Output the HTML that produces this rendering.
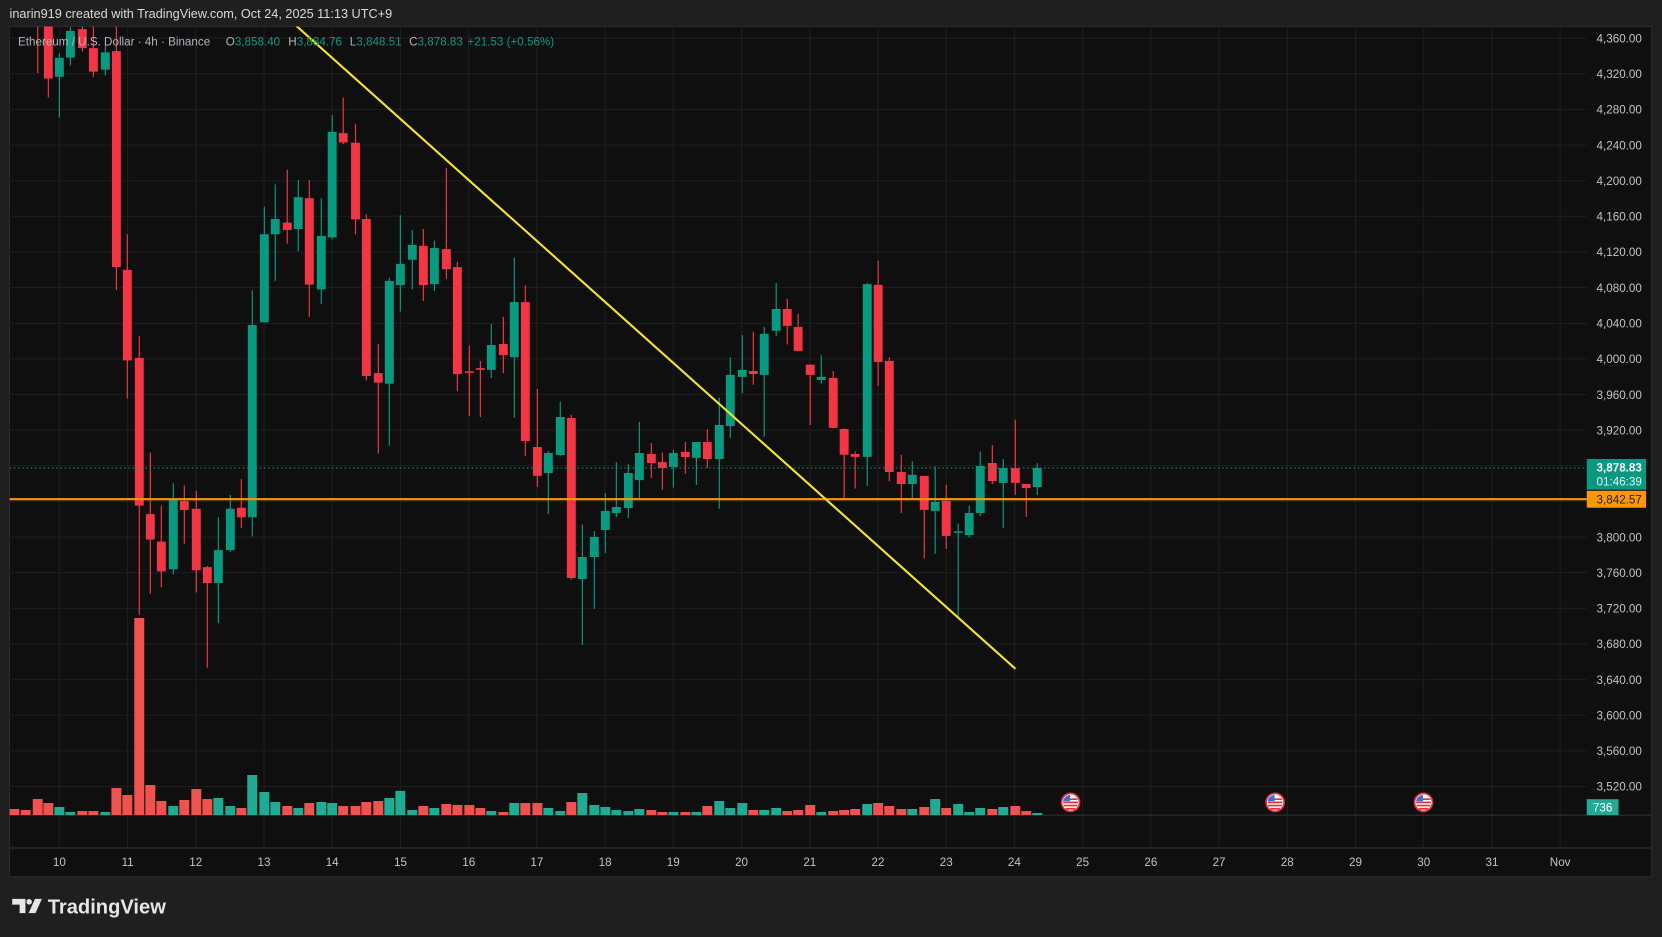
<!DOCTYPE html>
<html><head><meta charset="utf-8"><style>
html,body{margin:0;padding:0;background:#1f1f1f;overflow:hidden}
svg{display:block}
text{font-family:"Liberation Sans",sans-serif}
</style></head><body>
<svg width="1662" height="937" viewBox="0 0 1568 884" xmlns="http://www.w3.org/2000/svg">
<defs><clipPath id="pc"><rect x="9" y="25" width="1488" height="744"/></clipPath>
<g id="flag"><circle r="8.5" fill="#fff" stroke="#e3303d" stroke-width="1.6"/><path d="M-6.5 -3H6.5M-7 0H7M-6.5 3H6.5M-4.5 6H4.5" stroke="#e3303d" stroke-width="1.6"/><path d="M-7 -1.2A7 7 0 0 1 -0.5 -7V-1.2Z" fill="#3b6fd8"/></g>
</defs>
<rect width="1568" height="884" fill="#1f1f1f"/>
<text x="9" y="17" font-size="12" fill="#d9d9d9">inarin919 created with TradingView.com, Oct 24, 2025 11:13 UTC+9</text>
<rect x="9" y="25" width="1549" height="802" fill="#0f0f0f" stroke="#2a2a2a" stroke-width="1"/>
<g stroke="#1e1e1e" stroke-width="1">
<path d="M9 36H1497M9 69.6H1497M9 103.2H1497M9 136.9H1497M9 170.5H1497M9 204.1H1497M9 237.7H1497M9 271.3H1497M9 305H1497M9 338.6H1497M9 372.2H1497M9 405.8H1497M9 439.4H1497M9 473.1H1497M9 506.7H1497M9 540.3H1497M9 573.9H1497M9 607.5H1497M9 641.2H1497M9 674.8H1497M9 708.4H1497M9 742H1497"/>
<path d="M56 25V800M120.4 25V800M184.7 25V800M249.1 25V800M313.4 25V800M377.8 25V800M442.2 25V800M506.5 25V800M570.9 25V800M635.2 25V800M699.6 25V800M764 25V800M828.3 25V800M892.7 25V800M957 25V800M1021.4 25V800M1085.8 25V800M1150.1 25V800M1214.5 25V800M1278.8 25V800M1343.2 25V800M1407.6 25V800M1471.9 25V800"/>
</g>
<path d="M9 769H1558M9 800H1558" stroke="#2e2e2e" stroke-width="1.2"/>
<g clip-path="url(#pc)">
<!-- volume -->
<path stroke="#ef5350" stroke-width="9.4" fill="none" d="M13.5 769V763.2M24.2 769V764.2M35.6 769V753.8M45.6 769V757.6M77.7 769V765.1M88.1 769V765.1M109.8 769V743.4M120.1 769V750M131.4 769V583M141.8 769V740.6M152.2 769V755.7M173.9 769V754.7M185.2 769V744.4M195.6 769V753.8M227.7 769V762.3M271 769V760.4M291.8 769V757.6M323.8 769V760.4M335.4 769V760.4M345.6 769V756.6M356.9 769V755.7M399.4 769V760.4M421.1 769V758.5M431.5 769V759.5M442.8 769V759.5M453.2 769V762.3M474.9 769V766.1M495.6 769V757.6M507 769V757.6M539 769V756.6M614.5 769V764.2M624.9 769V766.1M646.6 769V766.1M667.3 769V760.4M710.7 769V764.2M742.7 769V765.1M753 769V764.2M764.4 769V759.5M786.1 769V765.1M796.4 769V764.2M806.8 769V763.2M828.5 769V757.6M839 769V760.4M850.3 769V763.2M872 769V761.3M892.7 769V762.3M936.2 769V763.2M957.9 769V760.4M968.2 769V765.1"/>
<path stroke="#22ab94" stroke-width="9.4" fill="none" d="M56 769V761.3M66.4 769V766.1M99.4 769V766.1M163.5 769V760.4M206 769V752.9M217.3 769V760.4M238 769V731.2M249.4 769V747.2M259.7 769V756.6M281.4 769V762.3M303.1 769V756.6M313.4 769V757.6M367.3 769V752.9M377.7 769V746.2M389 769V764.2M409.8 769V762.3M463.5 769V765.1M485.2 769V757.6M517.3 769V762.3M528.6 769V765.1M549.4 769V748.1M560.7 769V759.5M571.1 769V761.3M581.5 769V764.2M592.8 769V765.1M603.2 769V763.2M635.3 769V766.1M657 769V766.1M678.6 769V755.7M689 769V762.3M700.3 769V757.6M721 769V764.2M732.3 769V762.3M774.8 769V766.1M818.2 769V758.5M860.7 769V763.2M882.3 769V753.8M904 769V758.5M914.4 769V766.1M924.8 769V762.3M946.5 769V761.3M978.6 769V767"/>
<!-- wicks red -->
<path stroke="#f23645" stroke-width="1.1" fill="none" d="M35.6 20V69M45.6 24V92M77.7 24V48.6M88.1 25V72.4M109.8 25V273.7M120.1 221V376M131.4 317V580M141.8 427V560M152.2 477V554M173.9 458V513M185.2 463V559M195.6 534V630M227.7 452V498M271 160V230M291.8 170V299M323.8 92V136M335.4 117V221M345.6 202V359M356.9 324.5V428M399.4 216V284M421.1 158.5V263M431.5 247V369M442.8 326V392.5M453.2 340.6V393.4M474.9 299V352M495.6 269V430M507 367V459.5M539 391.5V547M614.5 418V451M624.9 427V462M646.6 417V447M667.3 404.7V441.5M710.7 313V363M742.7 282V325M753 296V331M764.4 344V401M786.1 350V404M796.4 404V471.7M806.8 426V461M828.5 246V364M839 337V454M850.3 429V484M872 449V527M892.7 457.5V518M936.2 420V456.6M957.9 396V467M968.2 456.6V487.7"/>
<path stroke="#f23645" stroke-width="8.4" fill="none" d="M45.6 20V74M77.7 27.5V45.4M88.1 45.4V67.6M109.8 48.2V251.9M120.1 254.6V340M131.4 337.6V477M141.8 485V509M152.2 511V539M173.9 472.6V481.3M185.2 480V538M195.6 535V550M227.7 479V488M271 210V217M291.8 187V268.5M323.8 125.6V134.3M335.4 134.7V207M345.6 206.6V354.7M356.9 352V361M399.4 232V269M421.1 235V254M431.5 252V353M442.8 350.3V351.8M453.2 347.3V348.8M474.9 324.5V335M495.6 285V416M507 421.7V449M539 394.4V545.3M614.5 428.3V436.8M624.9 436V441.5M646.6 426.4V431.2M667.3 417V433M710.7 350V352.8M742.7 291.5V307.5M753 308.5V331M764.4 344V353.7M786.1 356.6V403.7M796.4 404.7V429M806.8 428.3V431M828.5 268.8V341.5M839 340.5V445.3M850.3 445.3V456.6M872 449V481M892.7 472.6V505.6M936.2 436.8V453.8M957.9 441.5V455.6M968.2 456.6V460.4"/>
<path stroke="#089981" stroke-width="1.1" fill="none" d="M56 50.6V111M66.4 25.6V61.7M99.4 42.6V71.2M163.5 456V542M206 488V588M217.3 467V521M238 274V506M249.4 195V304M259.7 174V265M281.4 170V237M303.1 187V287M313.4 108.5V226M367.3 262V420.5M377.7 203V294M389 217V273M409.8 227V274.5M463.5 305.7V356.6M485.2 243V394M517.3 425.5V485M528.6 379V430M549.4 495V608.5M560.7 501V574.6M571.1 465V521.7M581.5 436V488M592.8 438V488.7M603.2 398V470M635.3 424.5V460M657 417V457.6M678.6 375V480M689 337V413M700.3 316V371M721 308.5V412M732.3 267V317M774.8 335V362M818.2 267V458.5M860.7 435V470M882.3 440V522.6M904 494V583M914.4 477V507M924.8 426V487M946.5 433V498M978.6 437V467"/>
<path stroke="#089981" stroke-width="8.4" fill="none" d="M56 54.6V72.4M66.4 29.1V54.2M99.4 49.4V65.7M163.5 471V537M206 519V550M217.3 480V519M238 306.6V488M249.4 221V304M259.7 206.6V221M281.4 186V216M303.1 222.5V273M313.4 124.4V224M367.3 265V362M377.7 249V269M389 231V245M409.8 234V268M463.5 325.5V349M485.2 285V337M517.3 427.4V446.3M528.6 393.4V429.3M549.4 525.5V546.3M560.7 506.6V525.5M571.1 482V500M581.5 478.3V484M592.8 446.3V479.3M603.2 427.4V453M635.3 427.4V440.6M657 417V432M678.6 401V433M689 353.7V402M700.3 349V355.6M721 315V353.7M732.3 291.5V312M774.8 355.6V358.5M818.2 268V431M860.7 448V456.6M882.3 473.6V482M904 501.3V502.7M914.4 484V504.7M924.8 439.6V484M946.5 441.5V455.6M978.6 441.5V459.4"/>
<!-- lines -->
<path d="M9 441.5H1497" stroke="#089981" stroke-width="1" stroke-dasharray="1.5 2.5"/>
<path d="M9 471H1497" stroke="#ff9800" stroke-width="2"/>
<path d="M278 23L958 631" stroke="#f2e42a" stroke-width="2"/>
</g>
<use href="#flag" x="1010" y="757"/>
<use href="#flag" x="1203" y="757"/>
<use href="#flag" x="1343" y="757"/>
<!-- legend -->
<text x="17" y="43" font-size="11" fill="#b2b5be">Ethereum / U.S. Dollar · 4h · Binance<tspan x="213" fill="#b2b5be">O</tspan><tspan fill="#089981">3,858.40</tspan><tspan x="272" fill="#b2b5be">H</tspan><tspan fill="#089981">3,884.76</tspan><tspan x="330" fill="#b2b5be">L</tspan><tspan fill="#089981">3,848.51</tspan><tspan x="386" fill="#b2b5be">C</tspan><tspan fill="#089981">3,878.83</tspan><tspan x="441" fill="#089981">+21.53 (+0.56%)</tspan></text>
<!-- price axis -->
<g font-size="11" fill="#c3c3c3" text-anchor="end">
<text x="1549" y="40">4,360.00</text><text x="1549" y="73.6">4,320.00</text><text x="1549" y="107.2">4,280.00</text><text x="1549" y="140.9">4,240.00</text><text x="1549" y="174.5">4,200.00</text><text x="1549" y="208.1">4,160.00</text><text x="1549" y="241.7">4,120.00</text><text x="1549" y="275.3">4,080.00</text><text x="1549" y="309">4,040.00</text><text x="1549" y="342.6">4,000.00</text><text x="1549" y="376.2">3,960.00</text><text x="1549" y="409.8">3,920.00</text><text x="1549" y="510.7">3,800.00</text><text x="1549" y="544.3">3,760.00</text><text x="1549" y="577.9">3,720.00</text><text x="1549" y="611.5">3,680.00</text><text x="1549" y="645.2">3,640.00</text><text x="1549" y="678.8">3,600.00</text><text x="1549" y="712.4">3,560.00</text><text x="1549" y="746">3,520.00</text>
</g>
<rect x="1497" y="433" width="56" height="29" fill="#089981"/>
<text x="1549" y="445" font-size="11" fill="#fff" text-anchor="end" font-weight="bold">3,878.83</text>
<text x="1549" y="458" font-size="11" fill="#e8f5f2" text-anchor="end">01:46:39</text>
<rect x="1497" y="463" width="56" height="16" fill="#ff9800"/>
<text x="1549" y="475" font-size="11" fill="#1a1a1a" text-anchor="end">3,842.57</text>
<rect x="1497" y="754" width="30" height="15" fill="#22ab94"/>
<text x="1512" y="765.5" font-size="11" fill="#fff" text-anchor="middle">736</text>
<!-- time axis -->
<g font-size="11" fill="#c3c3c3" text-anchor="middle">
<text x="56" y="817">10</text><text x="120.4" y="817">11</text><text x="184.7" y="817">12</text><text x="249.1" y="817">13</text><text x="313.4" y="817">14</text><text x="377.8" y="817">15</text><text x="442.2" y="817">16</text><text x="506.5" y="817">17</text><text x="570.9" y="817">18</text><text x="635.2" y="817">19</text><text x="699.6" y="817">20</text><text x="764" y="817">21</text><text x="828.3" y="817">22</text><text x="892.7" y="817">23</text><text x="957" y="817">24</text><text x="1021.4" y="817">25</text><text x="1085.8" y="817">26</text><text x="1150.1" y="817">27</text><text x="1214.5" y="817">28</text><text x="1278.8" y="817">29</text><text x="1343.2" y="817">30</text><text x="1407.6" y="817">31</text><text x="1471.9" y="817">Nov</text>
</g>
<!-- logo -->
<g fill="#e6e6e6">
<path d="M11.5 848H24V861.5H18.5V853.5H11.5Z"/>
<circle cx="27.5" cy="850.8" r="2.6"/>
<path d="M33 848H39.5L33.5 861.5H27Z"/>
</g>
<text x="45" y="862" font-size="19" font-weight="bold" fill="#e6e6e6">TradingView</text>
</svg>
</body></html>
